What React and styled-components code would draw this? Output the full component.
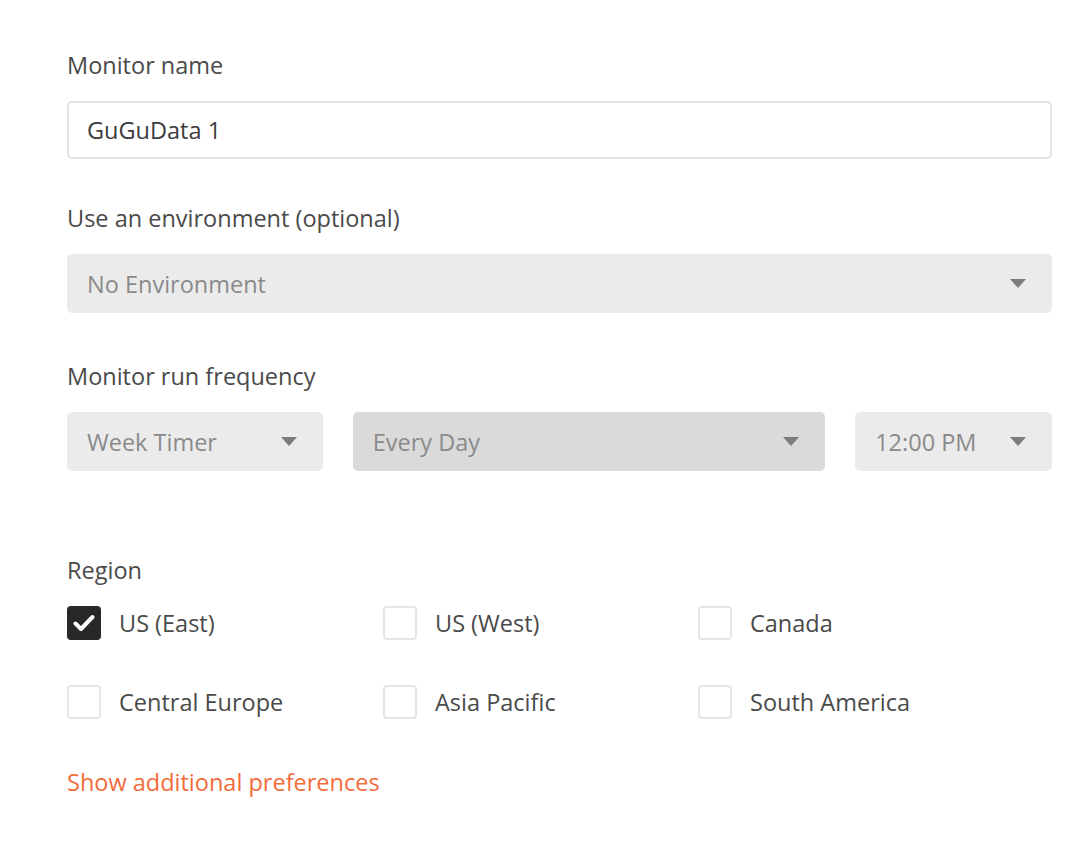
import styled, { createGlobalStyle } from "styled-components";

const GlobalStyle = createGlobalStyle`
  body {
    margin: 0;
    background: #fff;
    font-family: "Open Sans", "Liberation Sans", sans-serif;
  }
`;

const Page = styled.div`
  width: 985px;
  padding: 49px 0 0 67px;
`;

const Field = styled.div`
  display: flex;
  flex-direction: column;
  margin-bottom: ${(props) => props.gap || "40px"};
`;

const Label = styled.div`
  font-size: 23.5px;
  line-height: 32px;
  color: #4a4a4a;
  margin-bottom: ${(props) => props.space || "20px"};
`;

const TextInput = styled.div`
  box-sizing: border-box;
  height: 58px;
  border: 2px solid #e2e2e2;
  border-radius: 5px;
  padding: 0 18px;
  display: flex;
  align-items: center;
  font-size: 23.5px;
  color: #3c3c3c;
`;

const Select = styled.div`
  box-sizing: border-box;
  height: 59px;
  width: ${(props) => props.width || "100%"};
  background: ${(props) => (props.dark ? "#dadada" : "#ebebeb")};
  border-radius: 5px;
  padding: 0 26px 0 20px;
  display: flex;
  align-items: center;
  justify-content: space-between;
  font-size: 23.5px;
  color: #8a8a8a;
`;

const Arrow = styled.span`
  width: 0;
  height: 0;
  border-left: 8px solid transparent;
  border-right: 8px solid transparent;
  border-top: 9px solid #7c7c7c;
`;

const FreqRow = styled.div`
  display: flex;
  gap: 30px;
`;

const RegionGrid = styled.div`
  display: grid;
  grid-template-columns: 316px 315px 1fr;
  row-gap: 45px;
`;

const Check = styled.label`
  display: flex;
  align-items: center;
  gap: 18px;
  font-size: 23.5px;
  color: #4a4a4a;
`;

const Box = styled.span`
  box-sizing: border-box;
  width: 34px;
  height: 34px;
  border-radius: 4px;
  border: ${(props) => (props.checked ? "none" : "2px solid #e6e6e6")};
  background: ${(props) => (props.checked ? "#282828" : "#fff")};
  display: flex;
  align-items: center;
  justify-content: center;
`;

const Link = styled.a`
  display: inline-block;
  margin-top: 47px;
  font-size: 23.5px;
  line-height: 32px;
  color: #f26b3a;
  text-decoration: none;
`;

const regions = [
  { name: "US (East)", checked: true },
  { name: "US (West)" },
  { name: "Canada" },
  { name: "Central Europe" },
  { name: "Asia Pacific" },
  { name: "South America" },
];

const App = () => {
  return (
    <>
      <GlobalStyle />
      <Page>
        <Field gap="43px">
          <Label space="20px">Monitor name</Label>
          <TextInput>GuGuData 1</TextInput>
        </Field>
        <Field gap="47px">
          <Label>Use an environment (optional)</Label>
          <Select>
            No Environment
            <Arrow />
          </Select>
        </Field>
        <Field gap="83px">
          <Label>Monitor run frequency</Label>
          <FreqRow>
            <Select width="256px">
              Week Timer
              <Arrow />
            </Select>
            <Select width="473px" dark>
              Every Day
              <Arrow />
            </Select>
            <Select width="197px">
              12:00 PM
              <Arrow />
            </Select>
          </FreqRow>
        </Field>
        <Field gap="0">
          <Label>Region</Label>
          <RegionGrid>
            {regions.map((r) => (
              <Check key={r.name}>
                <Box checked={r.checked}>
                  {r.checked && (
                    <svg width="22" height="18" viewBox="0 0 22 18">
                      <path
                        d="M2.5 9.5 L8 15 L19.5 3"
                        fill="none"
                        stroke="#fff"
                        strokeWidth="4"
                        strokeLinecap="round"
                        strokeLinejoin="round"
                      />
                    </svg>
                  )}
                </Box>
                {r.name}
              </Check>
            ))}
          </RegionGrid>
        </Field>
        <Link href="#">Show additional preferences</Link>
      </Page>
    </>
  );
};

export default App;
